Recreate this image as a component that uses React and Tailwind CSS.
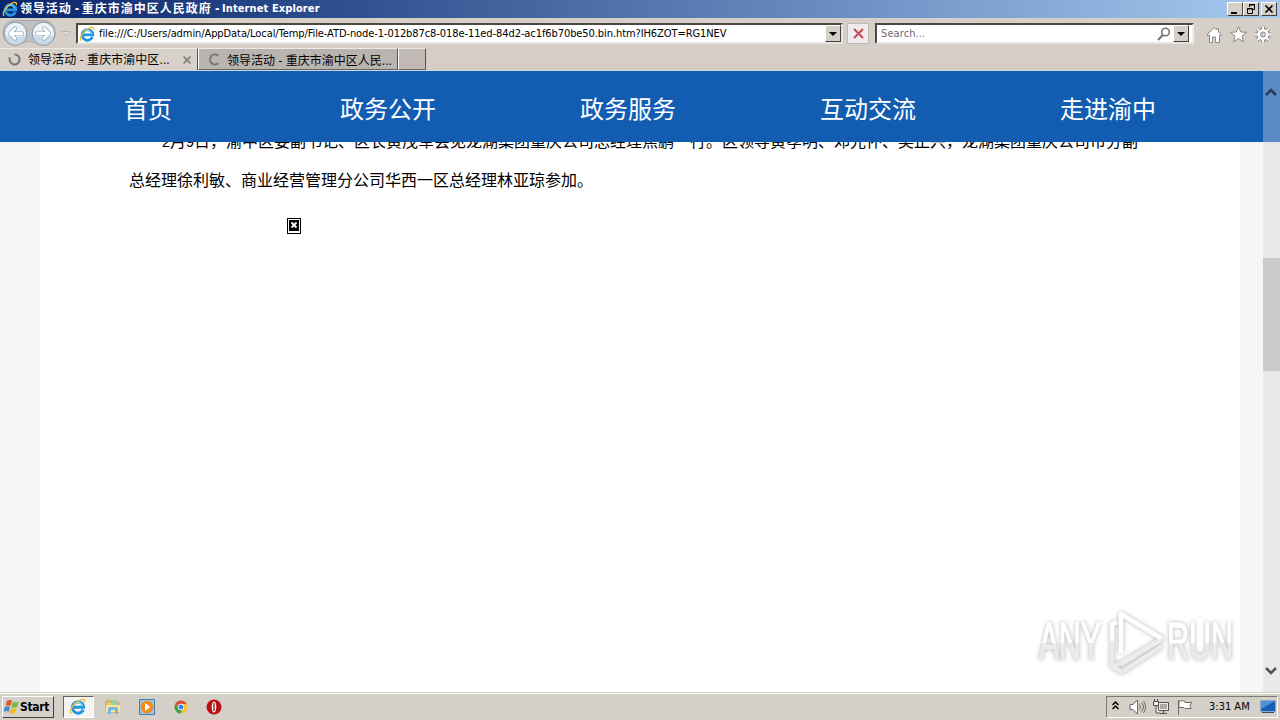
import clsx from 'clsx';

const navItems = ['首页', '政务公开', '政务服务', '互动交流', '走进渝中'];

const raised = 'border border-t-white border-l-white border-r-[#404040] border-b-[#404040] bg-[#d4d0c8]';
const uiFont = "font-['DejaVu_Sans_Condensed','Noto_Sans_CJK_SC',sans-serif]";

function IeLogo({ size }) {
  return (
    <svg width={size} height={size} viewBox="0 0 16 16" fill="none" className="shrink-0">
      <path d="M13.400 11A5.300 5.300 0 1 1 13.800 8.800H4.600" stroke="#2196dc" strokeWidth="2.800" />
      <path d="M12.800 7.600A4.700 4.700 0 0 0 4 7" stroke="#8fdcf8" strokeWidth="1" />
      <path d="M2.200 14.800C-.8 13 4 5 10 2.200c3.500-1.700 5.400-.7 4.300 2" stroke="#f0bd3a" strokeWidth="1.300" />
    </svg>
  );
}

function Spinner({ partial }) {
  return (
    <svg width="13" height="13" viewBox="0 0 13 13" fill="none" className="shrink-0">
      <path
        d={partial ? 'M10.300 10.300A5 5 0 1 1 10.300 2.700' : 'M6.500 1.500A5 5 0 1 1 2 4.500'}
        stroke="#777"
        strokeWidth="2"
      />
    </svg>
  );
}

function DropArrow({ className }) {
  return (
    <span className={clsx('flex items-center justify-center shrink-0', raised, className)}>
      <svg width="8" height="4" viewBox="0 0 8 4">
        <path d="M0 0h8L4 4z" fill="#000" />
      </svg>
    </span>
  );
}

function TitleBar() {
  return (
    <div className="h-[18px] flex items-center pl-[2px] pr-[3px] bg-linear-to-r from-[#0a246a] to-[#a6caf0]">
      <IeLogo size={16} />
      <div className="ml-[2px] flex text-[12px] leading-[18px] font-bold text-white whitespace-pre">
        <span className="tracking-[0.9px]">领导活动</span>
        <span className="tracking-[-0.6px]"> - </span>
        <span className="tracking-[1px]">重庆市渝中区人民政府</span>
        <span className="tracking-[-0.6px]"> - </span>
        <span className="text-[11px] tracking-[0.1px]">Internet Explorer</span>
      </div>
      <div className="ml-auto flex">
        <span className={clsx('w-4 h-[14px]', raised)}>
          <svg width="14" height="12" viewBox="0 0 14 12">
            <path d="M3 9h6v2H3z" />
          </svg>
        </span>
        <span className={clsx('w-4 h-[14px]', raised)}>
          <svg width="14" height="12" viewBox="0 0 14 12" fill="none" stroke="#000">
            <path d="M5.500 4V1.500h5v5H9M5 2h6M3.500 5.500h5v5h-5zM3 6h6" />
          </svg>
        </span>
        <span className={clsx('ml-[2px] w-4 h-[14px]', raised)}>
          <svg width="14" height="12" viewBox="0 0 14 12" stroke="#000" strokeWidth="1.600">
            <path d="m3.500 2.500 7 7M10.500 2.500l-7 7" />
          </svg>
        </span>
      </div>
    </div>
  );
}

function HistoryButtons() {
  return (
    <svg width="74" height="30" viewBox="0 0 74 30" fill="none" className="shrink-0">
      <path d="M15 2.500h28c7 0 12 5 12 12.500s-5 12.500-12 12.500c-6 0-8-4-14-4s-8 4-14 4C8 27.500 3 22 3 15S8 2.500 15 2.500z" fill="#c1c0c1" stroke="#aaa9aa" />
      <g fill="#edf2f6" stroke="#8194a5">
        <circle cx="15.500" cy="15.500" r="11.300" />
        <circle cx="43.500" cy="15.500" r="11.300" />
      </g>
      <path d="M5.500 17c5 3 15 3 20 0a10 10 0 0 1-20 0M33.500 17c5 3 15 3 20 0a10 10 0 0 1-20 0" fill="#c9d9e5" />
      <g strokeLinejoin="round" strokeLinecap="round">
        <path d="M22 15.500H10m5-5-5 5 5 5M37 15.500h12m-5-5 5 5-5 5" stroke="#92a5b5" strokeWidth="4.200" />
        <path d="M22 15.500H10m5-5-5 5 5 5M37 15.500h12m-5-5 5 5-5 5" stroke="#fff" strokeWidth="2.800" />
      </g>
      <path d="M62 13.500h8l-4 4z" fill="#e4e1dd" stroke="#b7b3ae" />
    </svg>
  );
}

const gearTeeth = 'M58 2v16M50 10h16M52.340 4.340l11.320 11.320M63.660 4.340 52.340 15.660';

function ToolIcons() {
  return (
    <svg width="72" height="20" viewBox="0 0 72 20" fill="#fff" stroke="#8b8987" strokeLinejoin="round" className="ml-[12px] mt-[7px] shrink-0">
      <path d="m1 10 7-7.500 2.500 2.500V3.500h2V7l3 3-1 1-1-1v7.500h-4V12h-3v5.500h-3V10l-1.500 1z" />
      <path d="m32.500 1.500 2.200 5.500 5.800.3-4.500 3.700 1.600 5.800-5.100-3.300-5.100 3.300L29 11l-4.500-3.700 5.800-.3z" />
      <g transform="translate(-1 -.5)">
        <path d={gearTeeth} strokeWidth="3.800" />
        <circle cx="58" cy="10" r="5.800" />
        <path d={gearTeeth} stroke="#fff" strokeWidth="2" />
        <circle cx="58" cy="10" r="5.300" stroke="none" />
        <circle cx="58" cy="10" r="2.500" fill="#d4d0c8" />
      </g>
    </svg>
  );
}

function AddressBar() {
  return (
    <div className="h-[30px] flex items-start bg-[#d5cfc8]">
      <HistoryButtons />
      <div className="ml-[2px] mt-[5px] w-[767px] h-[21px] shrink-0 flex items-center bg-white border-2 border-t-[#4c4844] border-l-[#4c4844] border-r-[#e8e5e1] border-b-[#e8e5e1]">
        <span className="ml-px flex">
          <IeLogo size={16} />
        </span>
        <span className="ml-[4px] text-[11px] leading-4 whitespace-nowrap tracking-[-0.083px]">
          file:///C:/Users/admin/AppData/Local/Temp/File-ATD-node-1-012b87c8-018e-11ed-84d2-ac1f6b70be50.bin.htm?IH6ZOT=RG1NEV
        </span>
        <DropArrow className="ml-auto w-4 h-[17px]" />
      </div>
      <span className="ml-[4px] mt-[5px] w-[22px] h-[21px] shrink-0 flex items-center justify-center border border-[#bebbb9] bg-[#eeecef]">
        <svg width="11" height="11" viewBox="0 0 11 11" stroke="#c74b50" strokeWidth="2">
          <path d="m1 1 9 9M10 1l-9 9" />
        </svg>
      </span>
      <div className="ml-[6px] mt-[5px] w-[319px] h-[21px] shrink-0 flex items-center bg-white border-2 border-t-[#4c4844] border-l-[#4c4844] border-r-[#f0edea] border-b-[#e8e5e1]">
        <span className="ml-[4px] pt-[2px] text-[11px] text-[#6d6d6d] tracking-[0.1px]">Search...</span>
        <svg width="14" height="14" viewBox="0 0 14 14" fill="none" stroke="#77736f" className="ml-auto mr-[2px]">
          <circle cx="8.500" cy="5" r="3.800" strokeWidth="1.500" />
          <path d="m1 13 4.800-5" strokeWidth="2" />
        </svg>
        <DropArrow className="w-4 h-[17px] mr-[3px]" />
      </div>
      <ToolIcons />
    </div>
  );
}

function Tabs() {
  return (
    <div className="h-[23px] flex bg-[#d6cec4] border-b border-[#c5d7e5] text-[12px] whitespace-nowrap">
      <div className="w-[198px] flex items-center pl-[8px] bg-[#d7d1ca] border-t border-t-[#ece8e3] border-r border-r-[#55504b]">
        <Spinner />
        <span className="ml-[7px] pt-px tracking-[0.05px]">领导活动 - 重庆市渝中区...</span>
        <svg width="8" height="8" viewBox="0 0 8 8" stroke="#85817c" strokeWidth="1.700" className="ml-auto mr-[6px]">
          <path d="m.5.5 7 7M7.500.5l-7 7" />
        </svg>
      </div>
      <div className="w-[200px] h-[22px] flex items-center pl-[9px] bg-[#bab4b1] border border-t-[#eeeae6] border-l-white border-r-[#55504b] border-b-[#6a6560]">
        <Spinner partial />
        <span className="ml-[6px] pt-[3px]">领导活动 - 重庆市渝中区人民...</span>
      </div>
      <div className="w-[28px] h-[22px] bg-[#c0b9b5] border border-t-[#eeeae6] border-l-white border-r-[#55504b] border-b-[#6a6560]" />
    </div>
  );
}

function SiteNav() {
  return (
    <nav className="h-[71px] shrink-0 bg-[#125db2] px-[28px] flex text-white text-[24px]">
      {navItems.map((item) => (
        <span key={item} className="w-[240px] shrink-0 text-center leading-[78px]">
          {item}
        </span>
      ))}
    </nav>
  );
}

function Article() {
  return (
    <main className="flex-1 min-h-0 overflow-hidden bg-[#f6f6f6] px-10 mr-[-17px]">
      <div className="flow-root h-full w-[1200px] bg-white pl-[90px] text-[16px] leading-[39px] whitespace-nowrap font-['Liberation_Sans','Noto_Sans_CJK_SC',sans-serif]">
        <p className="mt-[-20px] h-[39px] pl-8">
          <span className="text-[14.4px]">2</span>月<span className="text-[14.4px]">9</span>
          日，渝中区委副书记、区长黄茂军会见龙湖集团重庆公司总经理焦鹏一行。区领导黄孝明、邓光怀、吴正兴，龙湖集团重庆公司市分副
        </p>
        <p className="h-[39px] ml-[-1px]">总经理徐利敏、商业经营管理分公司华西一区总经理林亚琼参加。</p>
        <svg width="14" height="16" viewBox="0 0 14 16" className="ml-[157px] mt-[18px]">
          <path d="M0 0h14v16H0z" />
          <path d="M1 1h12v14H1z" fill="#fff" />
          <path d="M2 2h10v11H2z" />
          <path d="m4.500 4.500 5 5M9.500 4.500l-5 5" stroke="#fff" strokeWidth="1.800" />
        </svg>
      </div>
    </main>
  );
}

function ScrollBar() {
  return (
    <div className="w-[17px] h-full shrink-0 flex flex-col items-center bg-[#e9e9e9]">
      <div className="w-full h-[71px] flex justify-center pt-[17px] pr-px bg-[#5b8bc4]">
        <svg width="12" height="9" viewBox="0 0 12 9" fill="none" stroke="#263d59" strokeWidth="2.600">
          <path d="m1 7 5-5 5 5" />
        </svg>
      </div>
      <div className="mt-[116px] w-full h-[113px] bg-[#cacaca]" />
      <svg width="12" height="9" viewBox="0 0 12 9" fill="none" stroke="#555" strokeWidth="2.600" className="mt-auto mb-[17px] mr-px">
        <path d="m1 2 5 5 5-5" />
      </svg>
    </div>
  );
}

function Watermark() {
  return (
    <div className="absolute left-[1034px] top-[606px] w-[204px] h-[70px]">
      <svg width="204" height="70" viewBox="0 0 204 70" className="overflow-visible drop-shadow-[0_0_2px_#b4b4b4]">
        <defs>
          <linearGradient id="mark" x1="0" y1="16" x2="0" y2="53" gradientUnits="userSpaceOnUse">
            <stop offset="0.56" stopColor="#ffffff" />
            <stop offset="0.58" stopColor="#ebebeb" />
          </linearGradient>
        </defs>
        <g fill="url(#mark)" stroke="url(#mark)" strokeWidth="1.500" fontFamily="'Liberation Sans', sans-serif" fontSize="52">
          <text x="5" y="53" textLength="62" lengthAdjust="spacingAndGlyphs">ANY</text>
          <text x="133" y="53" textLength="66" lengthAdjust="spacingAndGlyphs">RUN</text>
        </g>
        <g fill="none" strokeWidth="4.500" strokeLinejoin="round">
          <path d="M87 45V8l41 25-41 25" stroke="#f1f1f1" />
          <path d="M78 16v44l10 6 40-26" stroke="#ebebeb" />
          <path d="M80 60l8-3 40-24" stroke="#ececec" />
          <path d="M87 47V8l40 24M78 35V18l5-2" stroke="#fff" />
        </g>
      </svg>
    </div>
  );
}

function TaskIcons() {
  return (
    <div className="flex items-center">
      <span className="ml-[9px] w-[31px] h-[22px] flex items-center justify-center pr-[3px] bg-[#f6f4f2] border border-t-[#68635e] border-l-[#68635e] border-r-white border-b-white">
        <IeLogo size={17} />
      </span>
      <svg width="16" height="16" viewBox="0 0 16 16" className="ml-[11px]">
        <path d="M1 2h5l1 2h7v9H1z" fill="#e6c76e" stroke="#bd9e50" />
        <path d="M7 1h6v5H7z" fill="#9dcfa9" />
        <path d="M1 6h14v7H1z" fill="#f7e5a0" />
        <path d="M3 15v-5q0-2 2-2h6q2 0 2 2v5h-3v-4H6v4z" fill="#76b9da" />
      </svg>
      <svg width="16" height="16" viewBox="0 0 16 16" className="ml-[18px]">
        <path d="M.5.5h15v15H.5z" fill="#9bc7e5" stroke="#427dac" />
        <circle cx="8" cy="8" r="6.300" fill="#f28a17" />
        <path d="m6 4 5.500 4L6 12z" fill="#fff" />
      </svg>
      <svg width="14" height="14" viewBox="0 0 14 14" className="ml-[19px]">
        <circle cx="7" cy="7" r="6.500" fill="#f4c42c" />
        <path d="M1.400 3.700A6.500 6.500 0 0 1 12.700 4H7L4.500 8.500z" fill="#dd4b3e" />
        <path d="M1.300 3.800 4.300 9 8.500 9.500 6.500 13.500A6.500 6.500 0 0 1 1.300 3.800" fill="#35a255" />
        <circle cx="7" cy="7" r="3.200" fill="#fff" />
        <circle cx="7" cy="7" r="2.500" fill="#4384dc" />
      </svg>
      <svg width="16" height="16" viewBox="0 0 16 16" className="ml-[18px]">
        <circle cx="8" cy="8" r="7.500" fill="#b80f15" />
        <ellipse cx="8" cy="8" rx="2.300" ry="5.500" fill="#fff" />
        <path d="M8 4v8" stroke="#a42a29" strokeWidth="1.500" />
      </svg>
    </div>
  );
}

function Tray() {
  return (
    <div className="ml-auto mr-[2px] w-[172px] h-[22px] flex items-center border border-t-[#7e7a75] border-l-[#7e7a75] border-r-white border-b-white">
      <svg width="7" height="9" viewBox="0 0 7 9" fill="none" stroke="#000" strokeWidth="1.500" className="ml-[5px] mb-[2px]">
        <path d="m.5 4 3-3 3 3M.5 8l3-3 3 3" />
      </svg>
      <svg width="17" height="16" viewBox="0 0 17 16" fill="#fff" stroke="#6c6965" className="ml-[10px]">
        <path d="M1 5.500h3L8.500 1v14L4 10.500H1z" />
        <path d="M10.500 5.500q2 2.500 0 5M12.500 3.500q4 4.500 0 9M14.500 2q4 6 0 12" fill="none" />
      </svg>
      <svg width="16" height="16" viewBox="0 0 16 16" fill="#eee" stroke="#54514e" className="ml-[7px]">
        <path d="M5.500 3.500h10v8h-10zM7 14.500h7M10.500 12v2" />
        <path d="M7 5h7v5H7z" fill="#aaa" stroke="none" />
        <path d="M.5 2.500h5v4h-5zM1.500 0v2M4.500 0v2M3 7v7h4" />
      </svg>
      <svg width="16" height="16" viewBox="0 0 16 16" fill="#fff" stroke="#706c68" className="ml-[8px]">
        <path d="M1.500 1v15M2 2.500q4-2 6 0v1h7l-2 3 1 3H8l-1-1H2z" />
      </svg>
      <span className="ml-[16px] w-[42px] pt-[2px] text-[11px] whitespace-nowrap">3:31 AM</span>
      <svg width="16" height="14" viewBox="0 0 16 14" className="ml-[9px]">
        <path d="M.5.5h15v11H.5z" fill="#1761b4" stroke="#8aaac7" />
        <path d="M1 1h14L1 9z" fill="#4b92d8" />
        <path d="M2 12h12v1H2z" fill="#354d65" />
      </svg>
    </div>
  );
}

function TaskBar() {
  return (
    <footer className="h-[28px] flex items-center bg-[#d4d0c8] border-t border-[#d4d0c8] shadow-[inset_0_1px_0_#fff]">
      <div className={clsx('ml-[2px] w-[52px] h-[22px] flex items-center', raised)}>
        <svg width="16" height="15" viewBox="0 0 16 15" className="ml-px">
          <path d="M3 2q3-2 5 0L6.500 7q-2-1.500-5 0z" fill="#e65526" />
          <path d="M9 2.500q3 2 6 0L13 8q-3 1.500-5.500 0z" fill="#75b943" />
          <path d="M1 8q3-1.500 5 0L4.500 13q-2-2-5 0z" fill="#3b8bd8" />
          <path d="M7 9q3 1.500 5.500 0L11 14q-3 1.500-5.500-.5z" fill="#f5bd25" />
        </svg>
        <span className="text-[12px] font-bold tracking-[-0.3px]">Start</span>
      </div>
      <TaskIcons />
      <Tray />
    </footer>
  );
}

export default function App() {
  return (
    <div className={clsx('relative w-[1280px] h-[720px] overflow-hidden flex flex-col text-black', uiFont)}>
      <TitleBar />
      <AddressBar />
      <Tabs />
      <div className="h-[621px] flex">
        <div className="w-[1263px] h-full flex flex-col overflow-hidden">
          <SiteNav />
          <Article />
        </div>
        <ScrollBar />
      </div>
      <TaskBar />
      <Watermark />
    </div>
  );
}
